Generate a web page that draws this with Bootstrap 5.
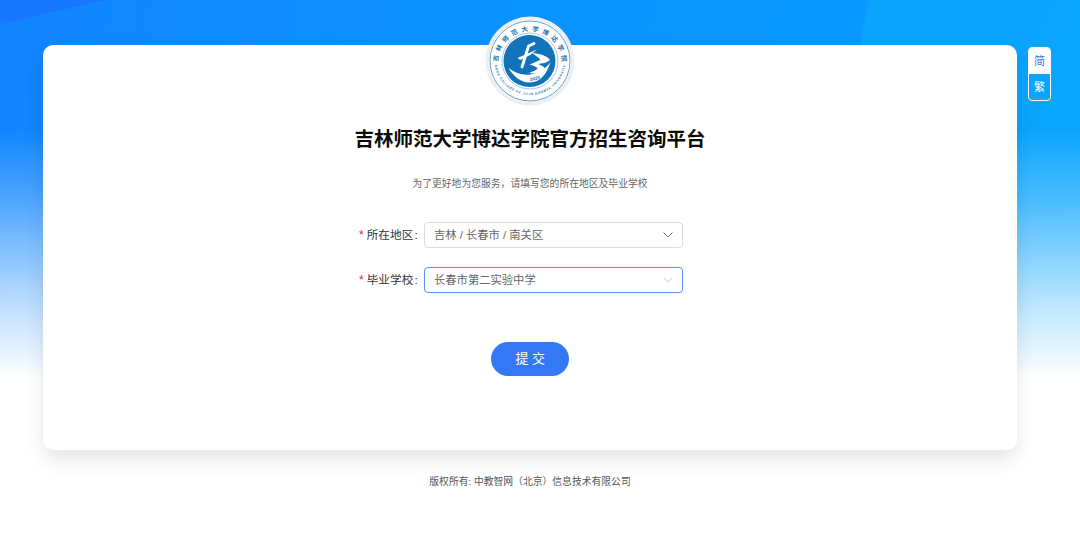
<!DOCTYPE html>
<html lang="zh-CN">
  <head>
    <meta charset="UTF-8" />
    <meta name="viewport" content="width=device-width, initial-scale=1.0">
    <title>吉林师范大学博达学院官方招生咨询平台</title>
    <link href="https://cdn.jsdelivr.net/npm/bootstrap@5.3.0/dist/css/bootstrap.min.css" rel="stylesheet" />
    <style>
      body {
        font-family: "Liberation Sans", "Noto Sans CJK SC", sans-serif;
        min-height: 555px;
        overflow: hidden;
        background-color: #fff;
        background-image:
          linear-gradient(to bottom, rgba(255,255,255,0) 130px, rgba(255,255,255,.26) 200px, rgba(255,255,255,.7) 300px, #fff 378px),
          linear-gradient(to bottom right, #1877ff 50%, rgba(24,119,255,0) 50.6%),
          radial-gradient(ellipse 352px 600px at 1200px 200px, #0aa6ff 0, #0aa4ff 99.6%, rgba(10,164,255,0) 100%),
          linear-gradient(100deg, #1285ff 0, #0a93ff 45%, #0a9bff 100%);
        background-size: 100% 100%, 105px 24px, 100% 100%, 100% 100%;
        background-repeat: no-repeat;
      }
      .page-wrap { padding: 45px 0 0 43px; gap: 11px; }
      .main-panel {
        width: 974px;
        height: 405px;
        position: relative;
        padding-top: 82px;
        background: #fff;
        border-radius: 10px;
        box-shadow: 0 10px 20px rgba(0,0,0,.1);
      }
      .school-logo { position: absolute; left: 442px; top: -29px; width: 90px; height: 90px; }
      .panel-title { font-size: 19.5px; font-weight: 700; line-height: 24px; color: #0b0b0b; margin: 0; }
      .panel-sub { font-size: 9.8px; line-height: 14px; color: #666; margin: 26px 0 0; }
      .form-area { margin-top: 31px; gap: 19px; width: 340px; margin-left: 300px; }
      .field-label { width: 81px; font-size: 11.7px; color: #333; white-space: nowrap; gap: 3px; padding-left: 16px; }
      .label-colon { margin-left: 1px; }
      .req { color: #f5222d; font-size: 12px; }
      .fake-select {
        width: 259px;
        height: 26px;
        padding: 0 9px;
        font-size: 11.3px;
        color: #666;
        border: 1px solid #dcdcdc;
        border-radius: 4px;
      }
      .fake-select.focused { border-color: #5c93f2; box-shadow: 0 0 1px rgba(51,120,246,.4); }
      .fake-select.focused svg { stroke: #c8c8c8; }
      .fake-select svg { stroke: #777; }
      .submit-btn {
        width: 78px;
        height: 34px;
        margin-top: 49px;
        padding: 0 0 0 4px;
        font-size: 13px;
        letter-spacing: 3.5px;
        color: #fff;
        background: #3478f6;
        border: 0;
        border-radius: 17px;
      }
      .lang-box {
        width: 23px;
        height: 54px;
        margin-top: 2px;
        border: 1px solid #fff;
        border-radius: 4px;
        overflow: hidden;
        font-size: 11px;
      }
      .lang-item { height: 26px; }
      .lang-item.on { background: #fff; color: #3f6fe8; }
      .lang-item.off { flex: 1; color: #fff; }
      .copy-line { width: 974px; margin: 25px 0 0 43px; font-size: 9.8px; line-height: 14px; color: #555; }
    </style>
  </head>
  <body>
    <div class="page-wrap d-flex align-items-start">
      <div class="main-panel text-center">
        <svg class="school-logo" viewBox="0 0 90 90">
          <defs>
            <path id="arcTop" d="M13 47a32 32 0 0 1 64 0" />
            <path id="arcBottom" d="M9 43a36 36 0 0 0 72 0" />
          </defs>
          <circle cx="45" cy="45" r="44.5" fill="#eeeeee" />
          <circle cx="45" cy="45" r="41" fill="#fff" />
          <circle cx="45" cy="45" r="40" fill="none" stroke="#4c97cf" stroke-width=".9" />
          <circle cx="45" cy="45" r="28" fill="none" stroke="#7fb5dc" stroke-width=".7" />
          <circle cx="44.5" cy="45" r="26" fill="#1273b9" />
          <text font-size="6.4" font-weight="700" fill="#1d6fae" text-anchor="middle">
            <textPath href="#arcTop" startOffset="50%" textLength="98">吉林师范大学博达学院</textPath>
          </text>
          <text font-size="3.2" font-weight="700" fill="#1d6fae" text-anchor="middle">
            <textPath href="#arcBottom" startOffset="50%" textLength="100">BODA COLLEGE OF JILIN NORMAL UNIVERSITY</textPath>
          </text>
          <path d="M49 27.5 43.5 30 37 51" fill="none" stroke="#fff" stroke-width="2.8" stroke-linecap="round" />
          <path d="M32.5 42 52 33.5 46 38.5 35.5 44z" fill="#fff" />
          <path d="M47.5 37C54 37.5 62 39.5 65 44 62 47 57 47.5 53 48 57 49.5 60 51 59.5 53 55 57 50 58 44 57 48 55.5 52 54 52.5 52 50 50 47 49 44.5 48.5 49 46.5 53 45.5 55.5 43.5 53 41 50 39.5 47.5 37z" fill="#fff" />
          <path d="M23.5 52C29 61 36 66.5 45 66.5 55 66.5 62 58 65.5 46 60 54 53 57 45 58.5 37 59.5 30 57 23.5 52z" fill="#fff" />
          <text x="50" y="64" font-size="4.6" font-weight="700" fill="#1273b9" text-anchor="middle" transform="rotate(-14 50 63)">2020</text>
        </svg>
        <h1 class="panel-title">吉林师范大学博达学院官方招生咨询平台</h1>
        <p class="panel-sub">为了更好地为您服务，请填写您的所在地区及毕业学校</p>
        <form class="form-area d-flex flex-column text-start">
          <div class="d-flex align-items-center">
            <label class="field-label d-flex align-items-center"><span class="req">*</span><span>所在地区<span class="label-colon">:</span></span></label>
            <div class="fake-select d-flex align-items-center justify-content-between">
              <span>吉林 / 长春市 / 南关区</span>
              <svg width="10" height="6" viewBox="0 0 10 6" fill="none" stroke-width="1"><path d="M.5.5 5 5 9.5.5" /></svg>
            </div>
          </div>
          <div class="d-flex align-items-center">
            <label class="field-label d-flex align-items-center"><span class="req">*</span><span>毕业学校<span class="label-colon">:</span></span></label>
            <div class="fake-select focused d-flex align-items-center justify-content-between">
              <span>长春市第二实验中学</span>
              <svg width="10" height="6" viewBox="0 0 10 6" fill="none" stroke-width="1"><path d="M.5.5 5 5 9.5.5" /></svg>
            </div>
          </div>
        </form>
        <button type="button" class="btn submit-btn">提交</button>
      </div>
      <div class="lang-box d-flex flex-column">
        <div class="lang-item on d-flex align-items-center justify-content-center">简</div>
        <div class="lang-item off d-flex align-items-center justify-content-center">繁</div>
      </div>
    </div>
    <div class="copy-line text-center">版权所有: 中教智网（北京）信息技术有限公司</div>
    <script src="https://cdn.jsdelivr.net/npm/bootstrap@5.3.0/dist/js/bootstrap.bundle.min.js"></script>
  </body>
</html>
